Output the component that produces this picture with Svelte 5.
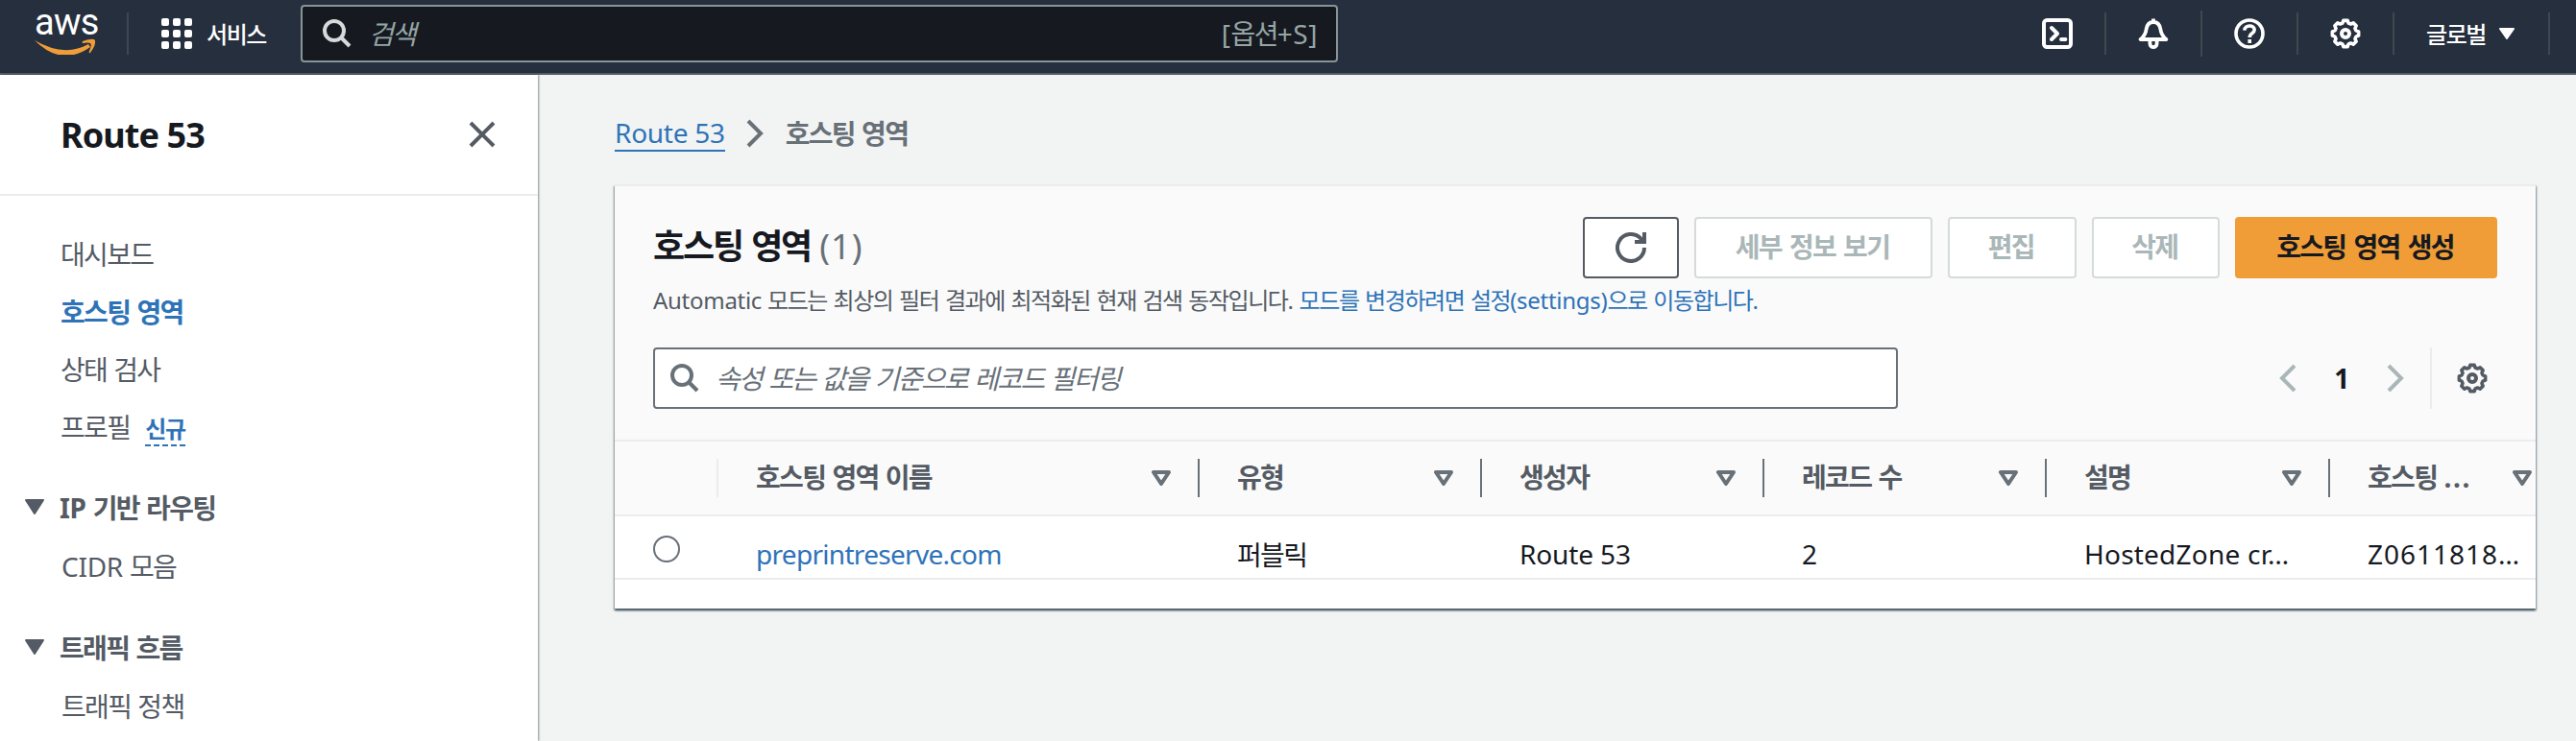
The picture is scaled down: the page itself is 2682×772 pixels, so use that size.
<script>
  // Route 53 콘솔 - 호스팅 영역 목록
  const SIDE_LINKS = [
    { label: '대시보드' },
    { label: '호스팅 영역', active: true },
    { label: '상태 검사' },
    { label: '프로필', badge: '신규' }
  ];

  const SIDE_GROUPS = [
    { title: 'IP 기반 라우팅', items: ['CIDR 모음'] },
    { title: '트래픽 흐름', items: ['트래픽 정책'] }
  ];

  const COLUMNS = [
    { key: 'name', label: '호스팅 영역 이름' },
    { key: 'type', label: '유형' },
    { key: 'owner', label: '생성자' },
    { key: 'records', label: '레코드 수' },
    { key: 'desc', label: '설명' },
    { key: 'id', label: '호스팅 ...' }
  ];

  const ZONES = [
    {
      name: 'preprintreserve.com',
      type: '퍼블릭',
      owner: 'Route 53',
      records: '2',
      desc: 'HostedZone cr…',
      id: 'Z0611818…'
    }
  ];

  let query = $state('');
  let filter = $state('');
  let selected = $state(null);

  // 한글과 영문은 자간이 달라서 구간별로 나눔
  function runs(text) {
    return text.match(/[가-힣 ]*[가-힣][가-힣 ]*|[^가-힣]+/g) ?? [];
  }

  function gearPath() {
    const pts = [];
    for (let i = 0; i < 8; i++) {
      for (const [deg, r] of [[-16, 5.7], [-9, 6.9], [9, 6.9], [16, 5.7]]) {
        const a = ((i * 45 + deg - 90) * Math.PI) / 180;
        pts.push(`${(8 + r * Math.cos(a)).toFixed(2)} ${(8 + r * Math.sin(a)).toFixed(2)}`);
      }
    }
    return `M${pts.join('L')}Z`;
  }
  const GEAR = gearPath();
</script>

{#snippet mix(text)}{#each runs(text) as run}<span class:ko={/[가-힣]/.test(run)}>{run}</span>{/each}{/snippet}

{#snippet gear()}
  <svg class="icon" viewBox="0 0 16 16">
    <path d={GEAR} stroke-width="1.8" stroke-linejoin="round" />
    <circle cx="8" cy="8" r="2" stroke-width="2" />
  </svg>
{/snippet}

{#snippet magnifier()}
  <svg class="search-icon" viewBox="0 0 30 30">
    <circle cx="12" cy="12" r="10" stroke-width="4" />
    <path d="M19 19l9 9" stroke-width="4" />
  </svg>
{/snippet}

<div class="page">
  <header class="topbar">
    <div class="logo">
      <span>aws</span>
      <svg viewBox="0 0 64 18">
        <path d="M0 3q31 18 56 4l2 3q-30 21-58-7z" />
        <path d="M50 4q11-4 13-1 1 5-5 13-2 1-1-2 3-7 1-8-2-1-8 0-1-1 0-2z" />
      </svg>
    </div>
    <i class="bar first"></i>
    <button class="services">
      <svg class="icon" viewBox="0 0 32 32">
        {#each [0, 12, 24] as y}
          {#each [0, 12, 24] as x}
            <rect {x} {y} width="8" height="8" rx="2" />
          {/each}
        {/each}
      </svg>
      <span class="ko">서비스</span>
    </button>
    <label class="global-search">
      {@render magnifier()}
      <input class="ko" type="text" placeholder="검색" bind:value={query} />
      <span class="shortcut">{@render mix('[옵션+S]')}</span>
    </label>

    <nav class="tools">
      <button class="tool" aria-label="CloudShell">
        <svg class="icon" viewBox="0 0 16 16" stroke-width="2" stroke-linecap="round" stroke-linejoin="round">
          <rect x="1" y="1" width="14" height="14" rx="1.6" />
          <path d="M5 5l3 3-3 3M10 11h2.2" />
        </svg>
      </button>
      <i class="bar"></i>
      <button class="tool" aria-label="알림">
        <svg class="icon" viewBox="0 0 16 16" stroke-width="1.9" stroke-linejoin="round">
          <path d="M8 .2v1.3M1.300 11h13.400C12.500 9.200 12 8 11.700 5.700 11.300 3.200 10 2 8 2S4.700 3.200 4.300 5.700C4 8 3.500 9.200 1.300 11z" />
          <path d="M6.200 11.500v1.600c0 2.600 3.600 2.600 3.600 0v-1.600" />
        </svg>
      </button>
      <i class="bar tall"></i>
      <button class="tool" aria-label="도움말">
        <svg class="icon" viewBox="0 0 16 16" stroke-width="1.8">
          <circle cx="8" cy="8" r="7" />
          <path d="M5.400 6.300C5.500 3.300 10.600 3.200 10.600 6c0 1.900-2.500 1.700-2.500 4M8.100 11v2" />
        </svg>
      </button>
      <i class="bar"></i>
      <button class="tool" aria-label="설정">{@render gear()}</button>
      <i class="bar"></i>
      <button class="region">
        <span class="ko">글로벌</span>
        <svg class="region-caret" viewBox="0 0 16 12"><path d="M1 1h14L8 11z" /></svg>
      </button>
      <i class="bar"></i>
    </nav>
  </header>

  <div class="body">
    <aside class="sidebar">
      <div class="side-head">
        <h2>Route 53</h2>
        <button aria-label="닫기">
          <svg class="close" viewBox="0 0 28 28"><path d="M2 2l24 24M26 2L2 26" /></svg>
        </button>
      </div>
      <ul class="side-links">
        {#each SIDE_LINKS as link}
          <li class:active={link.active}>
            {@render mix(link.label)}
            {#if link.badge}<span class="badge ko">{link.badge}</span>{/if}
          </li>
        {/each}
      </ul>
      {#each SIDE_GROUPS as group}
        <section class="side-group">
          <h3>
            <svg class="caret" viewBox="0 0 20 16"><path d="M1 1h18l-9 14z" /></svg>
            <span>{@render mix(group.title)}</span>
          </h3>
          {#each group.items as item}
            <p>{@render mix(item)}</p>
          {/each}
        </section>
      {/each}
    </aside>

    <main>
      <nav class="crumbs">
        <a href="#home">Route 53</a>
        <svg class="chevron" viewBox="0 0 18 30"><path d="M2 2l13 13L2 28" /></svg>
        <b class="ko">호스팅 영역</b>
      </nav>

      <section class="card">
        <div class="card-head">
          <div class="title-row">
            <h1><span class="ko">호스팅 영역</span> <span class="count">(1)</span></h1>
            <div class="actions">
              <button class="btn refresh" aria-label="새로 고침">
                <svg class="icon" viewBox="0 0 16 16" stroke-width="2">
                  <path d="M15 8a7 7 0 1 1-2-4.900L14.500 5M15 0v5H10" />
                </svg>
              </button>
              <button class="btn ko wide" disabled>세부 정보 보기</button>
              <button class="btn ko" disabled>편집</button>
              <button class="btn ko" disabled>삭제</button>
              <button class="btn ko primary">호스팅 영역 생성</button>
            </div>
          </div>
          <p class="hint">
            {@render mix('Automatic 모드는 최상의 필터 결과에 최적화된 현재 검색 동작입니다.')}
            <a href="#settings">{@render mix('모드를 변경하려면 설정(settings)으로 이동합니다.')}</a>
          </p>
          <div class="filter-row">
            <label class="filter">
              {@render magnifier()}
              <input class="ko" type="text" placeholder="속성 또는 값을 기준으로 레코드 필터링" bind:value={filter} />
            </label>
            <div class="pager">
              <svg class="chevron" viewBox="0 0 18 30"><path d="M16 2L3 15l13 13" /></svg>
              <b>1</b>
              <svg class="chevron" viewBox="0 0 18 30"><path d="M2 2l13 13L2 28" /></svg>
              <i class="pager-line"></i>
              <button class="prefs" aria-label="기본 설정">{@render gear()}</button>
            </div>
          </div>
        </div>

        <div class="table">
          <div class="row head">
            <div class="cell pick"></div>
            {#each COLUMNS as col}
              <div class="cell">
                <span class="label">{@render mix(col.label)}</span>
                <svg class="sort" viewBox="0 0 20 16"><path d="M2 2h16l-8 12z" /></svg>
              </div>
            {/each}
          </div>
          {#each ZONES as zone}
            <div class="row">
              <div class="cell pick">
                <input type="radio" name="zone" value={zone.id} bind:group={selected} />
              </div>
              {#each COLUMNS as col}
                <div class="cell {col.key}">
                  <span>{@render mix(zone[col.key])}</span>
                </div>
              {/each}
            </div>
          {/each}
        </div>
      </section>
    </main>
  </div>
</div>

<style>
  :global(body) {
    margin: 0;
    background: #f2f3f3;
  }
  .page {
    height: 772px;
    overflow: hidden;
    display: flex;
    flex-direction: column;
    font-family: 'Noto Sans', 'Noto Sans CJK KR', sans-serif;
    font-size: 28px;
    line-height: 40px;
    letter-spacing: -0.01em;
    color: #16191f;
    background: #f2f3f3;
  }
  .ko {
    font-family: 'Noto Sans CJK KR', sans-serif;
    letter-spacing: -0.06em;
    word-spacing: 0.09em;
  }
  button {
    font: inherit;
    color: inherit;
    background: none;
    border: 0;
    padding: 0;
  }
  input {
    appearance: none;
    border: 0;
    outline: 0;
    padding: 0 0 3px;
    margin: 0;
    background: none;
    font-size: 28px;
    font-style: italic;
    color: inherit;
    flex: 1;
    min-width: 0;
  }
  svg {
    display: block;
    flex: none;
    fill: none;
    stroke: currentColor;
  }
  a {
    color: #2e73b8;
    text-decoration: none;
  }
  .icon {
    width: 32px;
    height: 32px;
  }
  .search-icon {
    width: 30px;
    height: 30px;
  }

  /* 상단 바 */
  .topbar {
    box-sizing: border-box;
    height: 78px;
    flex: none;
    display: flex;
    align-items: center;
    padding: 0 27px 6px 36px;
    background: #262f3e;
    border-bottom: 2px solid #545b64;
    color: #fff;
    font-size: 24px;
  }
  .logo {
    width: 64px;
    height: 70px;
    display: flex;
    flex-direction: column;
  }
  .logo span {
    height: 39px;
    padding-top: 1px;
    box-sizing: border-box;
    font-family: Roboto, sans-serif;
    font-size: 38px;
    line-height: 45px;
    letter-spacing: -0.02em;
  }
  .logo svg {
    width: 64px;
    height: 18px;
  }
  .logo path {
    fill: #ef9d38;
    stroke: none;
  }
  .bar {
    width: 2px;
    height: 44px;
    background: #414750;
  }
  .bar.first {
    margin: 0 34px 0 32px;
  }
  .bar.tall {
    height: 48px;
  }
  .services {
    display: flex;
    align-items: center;
    gap: 15px;
    width: 145px;
    font-weight: 500;
  }
  .services .icon {
    fill: #fff;
    stroke: none;
  }
  .global-search {
    box-sizing: border-box;
    width: 1080px;
    height: 60px;
    display: flex;
    align-items: center;
    padding: 0 19px 0 21px;
    gap: 18px;
    border: 2px solid #879596;
    border-radius: 4px;
    background: #16191f;
    color: #d5dbdb;
  }
  .global-search input::placeholder {
    color: #95a5a6;
    opacity: 1;
  }
  .shortcut {
    font-size: 28px;
    letter-spacing: 0.02em;
    padding-bottom: 2px;
    color: #95a5a6;
  }
  .tools {
    margin-left: auto;
    display: flex;
    align-items: center;
  }
  .tool {
    width: 98px;
    display: flex;
    justify-content: center;
  }
  .region {
    box-sizing: border-box;
    display: flex;
    align-items: center;
    gap: 14px;
    width: 160px;
    padding-left: 33px;
    font-weight: 500;
  }
  .region-caret {
    width: 16px;
    height: 12px;
  }
  .region-caret path,
  .caret path {
    fill: currentColor;
    stroke-width: 2;
    stroke-linejoin: round;
  }

  .body {
    flex: 1;
    min-height: 0;
    display: flex;
  }

  /* 왼쪽 메뉴 */
  .sidebar {
    width: 560px;
    flex: none;
    background: #fff;
    color: #545b64;
    box-shadow: 1px 0 2px 0 rgba(0, 28, 36, 0.45);
  }
  .side-head {
    box-sizing: border-box;
    height: 126px;
    display: flex;
    align-items: center;
    justify-content: space-between;
    padding: 0 44px 0 63px;
    border-bottom: 2px solid #eaeded;
  }
  h2 {
    margin: 0;
    padding-top: 1px;
    font-size: 36px;
    letter-spacing: -0.025em;
    color: #16191f;
  }
  .close {
    width: 28px;
    height: 28px;
    stroke-width: 4;
  }
  .side-links {
    list-style: none;
    margin: 0;
    padding: 30px 0 0 63px;
  }
  .side-links li {
    height: 60px;
    line-height: 60px;
  }
  .active {
    color: #2e73b8;
    font-weight: 700;
  }
  .badge {
    display: inline-block;
    margin-left: 9px;
    font-size: 24px;
    line-height: 34px;
    font-weight: 700;
    color: #2e73b8;
    border-bottom: 2px dashed #2e73b8;
  }
  .side-group {
    height: 146px;
  }
  h3 {
    margin: 0;
    height: 60px;
    padding: 24px 0 0 26px;
    display: flex;
    align-items: center;
    gap: 16px;
    font-size: 28px;
  }
  .caret {
    width: 20px;
    height: 16px;
  }
  .side-group p {
    margin: 0;
    padding: 11px 0 0 64px;
  }

  main {
    flex: 1;
    min-width: 0;
    padding: 0 42px 0 80px;
  }
  .crumbs {
    box-sizing: border-box;
    height: 114px;
    padding-top: 9px;
    display: flex;
    align-items: center;
    gap: 22px;
    color: #687078;
  }
  .crumbs a {
    line-height: 35px;
    border-bottom: 2px solid #2e73b8;
  }
  .crumbs .chevron {
    margin-bottom: 1px;
  }
  .crumbs b {
    margin: 0 0 3px 1px;
  }
  .chevron {
    width: 18px;
    height: 30px;
    stroke-width: 4;
  }

  /* 목록 카드 */
  .card {
    box-sizing: border-box;
    height: 442px;
    overflow: hidden;
    background: #fff;
    border-top: 2px solid #eaeded;
    box-shadow:
      0 2px 2px 0 rgba(0, 28, 36, 0.45),
      1px 2px 2px 0 rgba(0, 28, 36, 0.3),
      -1px 2px 2px 0 rgba(0, 28, 36, 0.3);
  }
  .card-head {
    box-sizing: border-box;
    height: 264px;
    padding: 32px 40px 0;
    background: #fafafa;
  }
  .title-row {
    display: flex;
    justify-content: space-between;
    height: 64px;
  }
  h1 {
    margin: 0;
    font-size: 36px;
    line-height: 57px;
    white-space: pre;
  }
  .count {
    font-weight: 400;
    letter-spacing: 0.03em;
    color: #687078;
  }
  .actions {
    display: flex;
    gap: 16px;
  }
  .btn {
    box-sizing: border-box;
    height: 64px;
    width: 133.5px;
    padding: 0 2px 4px 0;
    display: flex;
    align-items: center;
    justify-content: center;
    font-family: 'Noto Sans CJK KR', sans-serif;
    font-weight: 700;
    background: #fff;
    border: 2px solid #545b64;
    border-radius: 4px;
    color: #545b64;
  }
  .btn.refresh {
    width: 100px;
    padding: 0;
  }
  .btn.wide {
    width: 248px;
    word-spacing: 0.12em;
  }
  .btn:disabled {
    border-color: #d5dbdb;
    color: #aab7b8;
  }
  .btn.primary {
    width: 273px;
    word-spacing: 0.12em;
    background: #f09d38;
    border-color: #f09d38;
    color: #16191f;
  }
  .hint {
    margin: 0;
    font-size: 24px;
    line-height: 43px;
    height: 44px;
    color: #545b64;
  }
  .hint .ko,
  .hint :global(.ko) {
    word-spacing: 0.11em;
  }
  .filter-row {
    display: flex;
    justify-content: space-between;
    margin-top: 28px;
  }
  .filter {
    box-sizing: border-box;
    width: 1296px;
    height: 64px;
    display: flex;
    align-items: center;
    gap: 17px;
    padding: 0 16px;
    background: #fff;
    border: 2px solid #687078;
    border-radius: 4px;
    color: #687078;
  }
  .filter input::placeholder {
    color: #687078;
    opacity: 1;
  }
  .pager {
    display: flex;
    align-items: center;
    color: #aab7b8;
  }
  .pager b {
    width: 94px;
    text-align: center;
    color: #16191f;
  }
  .pager-line {
    width: 2px;
    height: 64px;
    margin: 0 26px 0 27px;
    background: #eaeded;
  }
  .prefs {
    margin-right: 10px;
    color: #545b64;
  }

  .row {
    box-sizing: border-box;
    height: 66px;
    width: 2026px;
    display: grid;
    grid-template-columns: 108px 501px repeat(3, 294px) 295px 240px;
    border-bottom: 2px solid #eaeded;
  }
  .row.head {
    height: 80px;
    border-top: 2px solid #eaeded;
    background: #fafafa;
    color: #545b64;
    font-weight: 700;
    align-items: center;
  }
  .cell {
    display: flex;
    align-items: center;
    justify-content: space-between;
    padding: 14px 28px 0 39px;
    white-space: nowrap;
    letter-spacing: -0.005em;
  }
  .head .cell {
    box-sizing: border-box;
    height: 40px;
    padding-top: 0;
    border-right: 2px solid #687078;
  }
  .head .label {
    padding-bottom: 3px;
  }
  .head .pick {
    border-right-color: #eaeded;
  }
  .head .cell:last-child {
    padding-right: 30px;
    letter-spacing: 0.06em;
    border-right: 0;
  }
  .cell.pick {
    padding: 4px 0 0 40px;
  }
  .cell.name {
    color: #2e73b8;
    letter-spacing: -0.025em;
  }
  .cell.desc {
    letter-spacing: 0.008em;
  }
  .cell.id {
    letter-spacing: 0.035em;
  }
  .sort {
    width: 20px;
    height: 16px;
    color: #687078;
    stroke-width: 4;
    stroke-linejoin: round;
  }
  input[type='radio'] {
    box-sizing: border-box;
    flex: none;
    width: 28px;
    height: 28px;
    padding: 0;
    border: 2px solid #687078;
    border-radius: 50%;
    background: #fff;
  }
</style>
